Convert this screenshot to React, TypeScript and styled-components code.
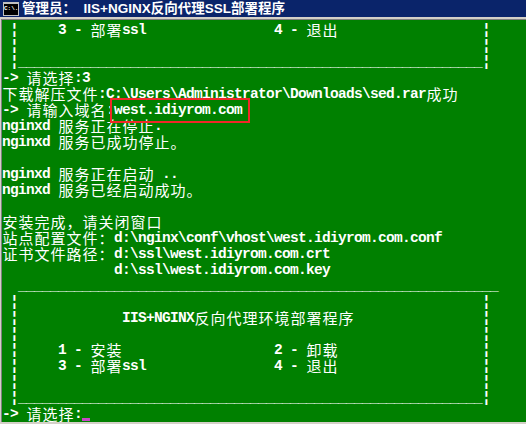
import React from 'react';
import styled, { createGlobalStyle } from 'styled-components';

const GlobalStyle = createGlobalStyle`
    html, body {
        margin: 0;
        padding: 0;
        background: #d4d0c8;
    }
`;

// window frame
const Window = styled.div`
    width: 526px;
    height: 424px;
    display: flex;
    flex-direction: column;
    overflow: hidden;
    background: #d4d0c8;
`;

const TitleBar = styled.div`
    height: 17px;
    background: #0a246a;
    display: flex;
    align-items: center;
    gap: 3px;
    padding-left: 3px;
    flex-shrink: 0;
`;

const ConsoleIcon = styled.div`
    width: 14px;
    height: 11px;
    background: #000;
    border: 1px solid #c0c0c0;
    border-top-width: 2px;
    color: #fff;
    font-family: "Liberation Mono", monospace;
    font-size: 6px;
    line-height: 10px;
    font-weight: bold;
    overflow: hidden;
    white-space: pre;
`;

const TitleText = styled.span`
    color: #fff;
    font-family: "Liberation Sans", "Noto Sans CJK SC", sans-serif;
    font-size: 13.5px;
    font-weight: bold;
    white-space: pre;
    line-height: 17px;
`;

const Console = styled.div`
    flex: 1;
    background: #008000;
    border-top: 2px solid #d4d0c8;
    border-left: 1px solid #d4d0c8;
    border-bottom: 2px solid #d4d0c8;
    box-shadow: inset 1px 1px 0 #808080;
    padding-left: 1px;
    padding-top: 3px;
    overflow: hidden;
`;

const Line = styled.div`
    display: flex;
    height: 16px;
    color: #fff;
`;

const Narrow = styled.span`
    font-family: "Liberation Mono", monospace;
    font-size: 14.5px;
    letter-spacing: -0.7px;
    font-weight: bold;
    line-height: 16px;
    white-space: pre;
`;

const Wide = styled.span`
    display: inline-block;
    width: 16px;
    height: 16px;
    text-align: center;
    font-family: "Noto Sans CJK SC", sans-serif;
    font-size: 15px;
    line-height: 16px;
    font-weight: 400;
`;

const Boxed = styled.span`
    position: relative;
    display: flex;

    &::after {
        content: '';
        position: absolute;
        left: -4px;
        right: -8px;
        top: -4px;
        bottom: -5px;
        border: 2px solid #f02828;
        pointer-events: none;
    }
`;

const Cursor = styled.span`
    width: 8px;
    height: 3px;
    margin-top: 12px;
    background: #c848c8;
`;

const isWide = (ch: string) => {
    const c = ch.codePointAt(0) || 0;
    return c >= 0x2e80;
};

// 把一行拆成半角/全角片段
const Text: React.FC<{ s: string }> = ({ s }) => {
    const parts: React.ReactNode[] = [];
    let buf = '';
    Array.from(s).forEach((ch, i) => {
        if (isWide(ch)) {
            if (buf) {
                parts.push(<Narrow key={'n' + i}>{buf}</Narrow>);
                buf = '';
            }
            parts.push(<Wide key={'w' + i}>{ch}</Wide>);
        } else {
            buf += ch;
        }
    });
    if (buf) parts.push(<Narrow key="end">{buf}</Narrow>);
    return <>{parts}</>;
};

const sp = (n: number) => ' '.repeat(n);
const bar = '¦';
const boxEmpty = ' ' + bar + sp(58) + bar;
const boxBottom = ' ' + bar + '_'.repeat(58) + bar;
const menu12 = ' ' + bar + sp(5) + '1 - 安装' + sp(19) + '2 - 卸载' + sp(18) + bar;
const menu34 = ' ' + bar + sp(5) + '3 - 部署ssl' + sp(16) + '4 - 退出' + sp(18) + bar;

const lines: string[] = [
    menu34,
    boxEmpty,
    boxBottom,
    '-> 请选择:3',
    '下载解压文件:C:\\Users\\Administrator\\Downloads\\sed.rar成功',
    '__DOMAIN__',
    'nginxd 服务正在停止.',
    'nginxd 服务已成功停止。',
    '',
    'nginxd 服务正在启动 ..',
    'nginxd 服务已经启动成功。',
    '',
    '安装完成，请关闭窗口',
    '站点配置文件：d:\\nginx\\conf\\vhost\\west.idiyrom.com.conf',
    '证书文件路径：d:\\ssl\\west.idiyrom.com.crt',
    sp(14) + 'd:\\ssl\\west.idiyrom.com.key',
    '  ' + '_'.repeat(60),
    boxEmpty,
    ' ' + bar + sp(13) + 'IIS+NGINX反向代理环境部署程序' + sp(16) + bar,
    boxEmpty,
    menu12,
    menu34,
    boxEmpty,
    boxBottom,
];

const App: React.FC = () => {
    return (
        <Window>
            <GlobalStyle />
            <TitleBar>
                <ConsoleIcon>{'C:\\.'}</ConsoleIcon>
                <TitleText>{'管理员：  IIS+NGINX反向代理SSL部署程序'}</TitleText>
            </TitleBar>
            <Console>
                {lines.map((l, i) =>
                    l === '__DOMAIN__' ? (
                        <Line key={i}>
                            <Text s="-> 请输入域名:" />
                            <Boxed>
                                <Narrow>west.idiyrom.com</Narrow>
                            </Boxed>
                        </Line>
                    ) : (
                        <Line key={i}>
                            <Text s={l} />
                        </Line>
                    )
                )}
                <Line>
                    <Text s="-> 请选择:" />
                    <Cursor />
                </Line>
            </Console>
        </Window>
    );
};

export default App;
